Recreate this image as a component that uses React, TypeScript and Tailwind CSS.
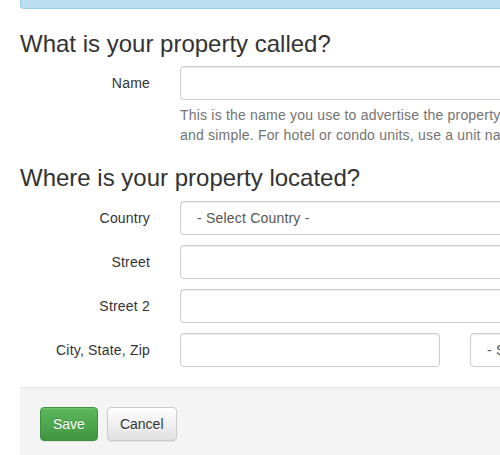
const font = { fontFamily: '"Liberation Sans", Arial, Helvetica, sans-serif' };

const inputCls =
  'block h-[34px] w-full rounded-[4px] border border-[#ccc] bg-white px-3 text-[14px] tracking-[0.2px] text-[#555] shadow-[inset_0_1px_1px_rgba(0,0,0,0.075)] outline-none';

const selectCls =
  'block h-[34px] w-full appearance-none rounded-[4px] border border-[#ccc] bg-white pl-[16px] pr-3 text-[14px] tracking-[0.2px] text-[#555] shadow-[inset_0_1px_1px_rgba(0,0,0,0.075)] outline-none';

function Row({ label, children }: { label: string; children: React.ReactNode }) {
  return (
    <div className="mb-[10px] flex gap-[30px]">
      <label className="w-[130px] shrink-0 pt-[7px] text-right text-[14px] leading-5 tracking-[0.2px] text-[#333]">
        {label}
      </label>
      <div className="flex-1">{children}</div>
    </div>
  );
}

export default function App() {
  return (
    <div className="h-[455px] w-[500px] overflow-hidden bg-white" style={font}>
      <div className="w-[820px] pl-5">
        <div className="h-[9px] rounded-bl-[4px] border-b border-l border-[#9acfea] bg-[#bbdff0]" />

        <h3 className="mt-[22px] mb-[9px] text-[24px] leading-[26px] font-normal text-[#333]">
          What is your property called?
        </h3>

        <Row label="Name">
          <input type="text" className={inputCls} />
          <p className="mt-[5px] text-[14px] leading-5 tracking-[0.2px] text-[#737373]">
            <span className="block whitespace-nowrap">
              This is the name you use to advertise the property to guests. Keep it short
            </span>
            <span className="block whitespace-nowrap">
              and simple. For hotel or condo units, use a unit name or number.
            </span>
          </p>
        </Row>

        <h3 className="mt-[20px] mb-[10px] text-[24px] leading-[26px] font-normal text-[#333]">
          Where is your property located?
        </h3>

        <Row label="Country">
          <select className={selectCls} defaultValue="">
            <option value="">- Select Country -</option>
          </select>
        </Row>
        <Row label="Street">
          <input type="text" className={inputCls} />
        </Row>
        <Row label="Street 2">
          <input type="text" className={inputCls} />
        </Row>
        <Row label="City, State, Zip">
          <div className="flex gap-[30px]">
            <div className="w-[260px]">
              <input type="text" className={inputCls} />
            </div>
            <div className="w-[180px]">
              <select className={selectCls} defaultValue="">
                <option value="">- State -</option>
              </select>
            </div>
            <div className="flex-1">
              <input type="text" className={inputCls} />
            </div>
          </div>
        </Row>

        <div className="mt-[20px] border-t border-[#e5e5e5] bg-[#f4f4f4] pt-[19px] pb-[20px] pl-5">
          <button
            type="button"
            className="h-[34px] rounded-[4px] border border-[#3e8f3e] bg-gradient-to-b from-[#5cb85c] to-[#419641] px-3 text-[14px] text-white [text-shadow:0_-1px_0_rgba(0,0,0,0.2)] shadow-[inset_0_1px_0_rgba(255,255,255,0.15),0_1px_1px_rgba(0,0,0,0.075)]"
          >
            Save
          </button>
          <button
            type="button"
            className="ml-[9px] h-[34px] rounded-[4px] border border-[#ccc] bg-gradient-to-b from-white to-[#e0e0e0] px-3 text-[14px] text-[#333] [text-shadow:0_1px_0_#fff] shadow-[inset_0_1px_0_rgba(255,255,255,0.15),0_1px_1px_rgba(0,0,0,0.075)]"
          >
            Cancel
          </button>
        </div>
      </div>
    </div>
  );
}
